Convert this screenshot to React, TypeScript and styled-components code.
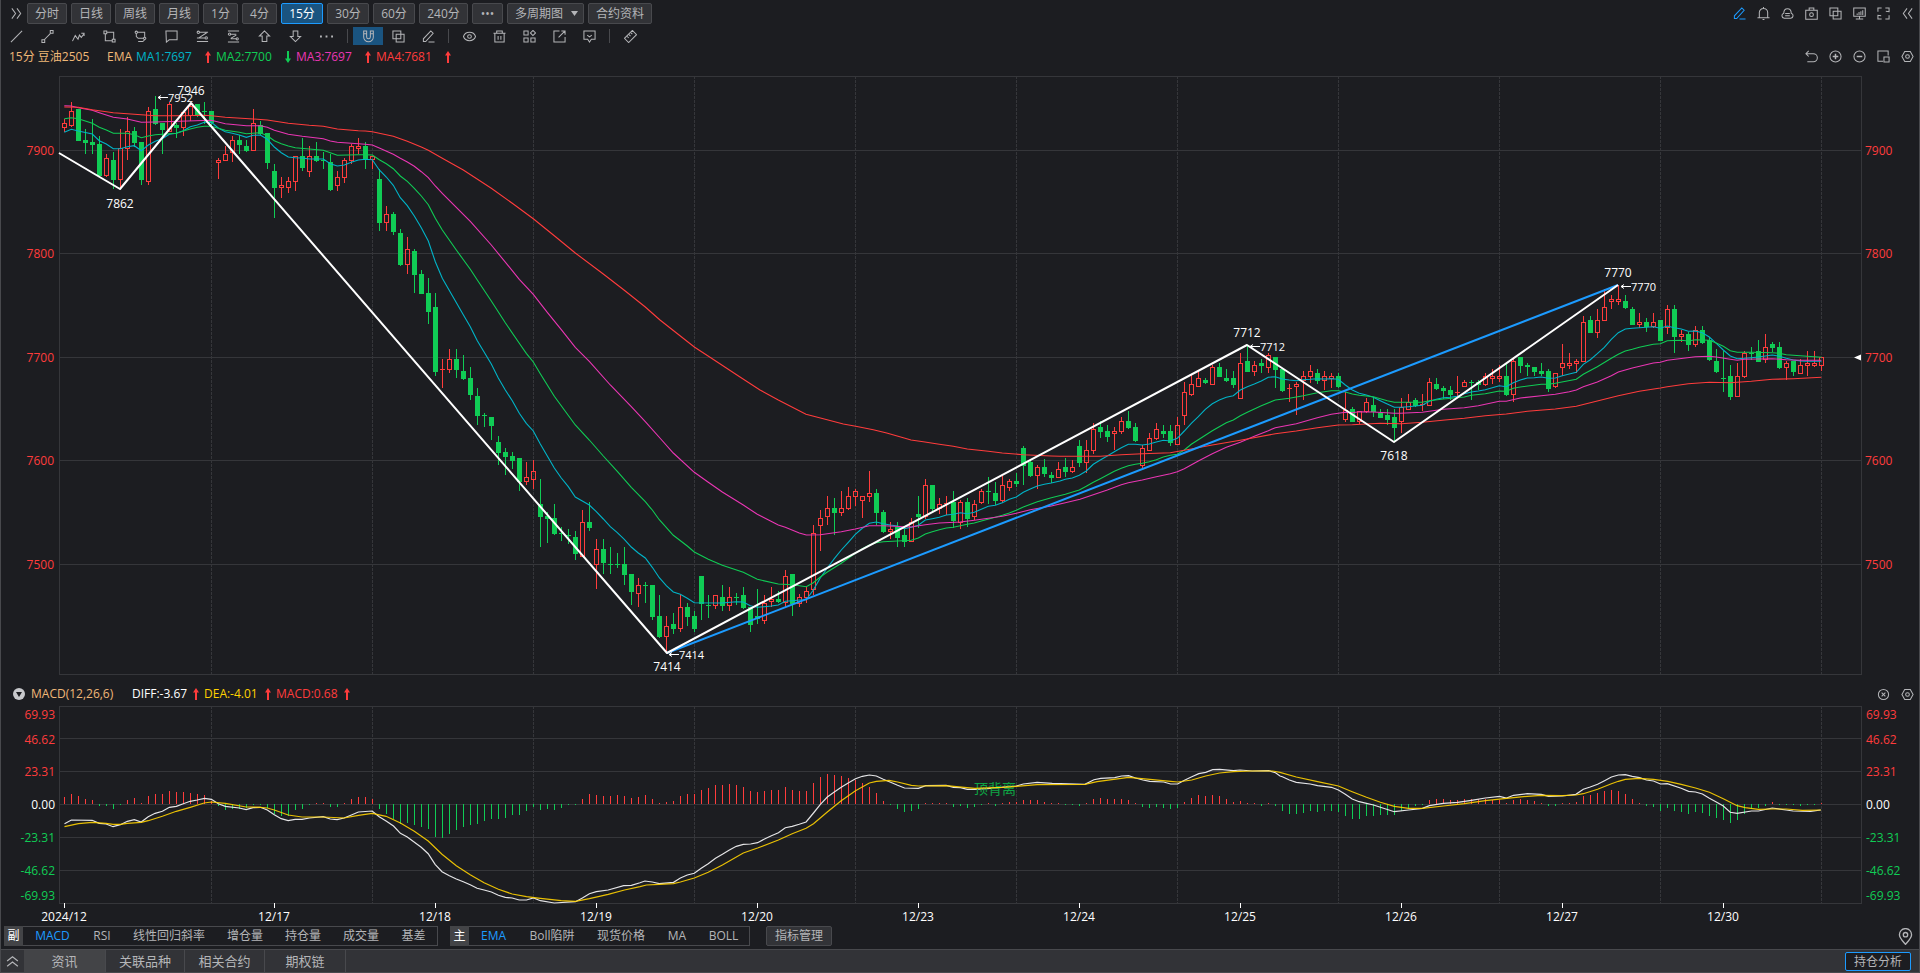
import React from "react";
import styled, { createGlobalStyle, css } from "styled-components";

/* ---------- theme ---------- */

const c = {
  bg: "#1c1d21",
  panel: "#323337",
  panelOn: "#434447",
  line: "#48494d",
  grid: "#35363a",
  text: "#b4b5b8",
  white: "#ffffff",
  tan: "#f0b878",
  cyan: "#00b4c8",
  green: "#10cc55",
  magenta: "#ea36b4",
  red: "#ff3c3c",
  yellow: "#ffd200",
  blue: "#1c9bff",
  activeBg: "#1a5480",
};

const FONT = '"Open Sans", "Noto Sans CJK SC", sans-serif';

const GlobalStyle = createGlobalStyle`
  * { box-sizing: border-box; }
  body { margin: 0; background: ${c.bg}; color: ${c.text}; font: 12px/16px ${FONT}; }
  button, select { font: inherit; color: inherit; margin: 0; }
`;

/* ---------- chart data ---------- */

// Each block holds consecutive 15-minute bars as colour + high, body top,
// body bottom, low. Values are in thirds of a pixel below the block's top.
const CANDLE_BLOCKS: { top: number; bars: string }[] = [
  {
    top: 70,
    bars: `r148,160,173,185 r96,124,167,171 g117,117,213,213 g177,210,219,252 g148,216,225,252 g198,222,318,320
    r252,265,317,322 g246,270,330,356 r177,235,328,352 r142,183,236,270 g172,183,219,232 g216,216,330,345
    r112,124,334,345 g78,117,162,165 g159,159,180,252 r96,102,185,186 g160,165,174,204 r128,128,173,198
    r98,110,136,152 g102,102,135,140 g96,123,126,163 g123,123,160,168 r264,271,277,327 r228,253,271,272
    r198,211,247,276 g196,210,225,252 g210,228,243,246 r117,160,241,243 g153,166,192,195 g189,189,279,297
    g282,303,354,444 r321,346,352,384 r321,334,352,369 r258,259,334,363 g204,258,294,303 r228,259,304,321
    g216,258,273,276 g246,270,273,297 g252,276,360,363 r303,322,346,363 r264,271,322,339 r222,229,271,282
    r204,229,235,252 g216,228,269,297 r258,259,268,297`,
  },
  {
    top: 130,
    bars: `g118,147,279,303 r228,253,278,303 g246,252,306,315 g297,309,405,408 r321,358,404,432 g357,363,435,489
    g420,432,492,492 g444,489,546,582 g489,531,726,738 r687,717,720,774 r657,688,719,729 g657,687,720,744
    g675,723,747,750 g711,744,795,810 g774,798,858,885 g849,855,858,891 g861,861,888,930 g918,936,969,1005
    g954,966,981,1035 g966,978,993,1017 g984,984,1056,1083 r996,1042,1055,1065 r990,1024,1049,1077
    g1047,1122,1161,1251 g1146,1158,1167,1239 g1122,1164,1212,1215 g1191,1209,1212,1233 g1197,1215,1218,1242
    g1203,1221,1272,1290 r1140,1177,1280,1282 g1116,1176,1194,1203 r1227,1258,1304,1377 g1227,1257,1299,1332
    g1251,1302,1305,1332 g1269,1302,1305,1314 g1251,1302,1335,1365 g1332,1332,1386,1425 r1344,1366,1391,1431
    g1356,1365,1368,1419 g1365,1365,1461,1470 g1395,1458,1521,1524`,
  },
  {
    top: 440,
    bars: `r528,559,590,636 g519,552,567,582 r465,502,566,576 g489,501,531,558 g513,528,567,576 g408,408,492,540
    g465,495,498,534 r465,466,497,507 g435,471,498,513 r441,472,497,513 g459,471,474,495 g441,465,504,507
    g501,501,555,576 g447,528,537,552 r465,490,542,552 r441,478,485,501 g453,477,486,489 r390,409,487,501
    g402,402,492,528 r462,472,491,501 r441,454,472,489 r255,280,448,465 r210,235,257,333 r168,205,230,255
    g174,204,219,285 r153,205,218,228 r141,169,206,210 r147,154,170,198 r168,169,182,234 r93,160,170,186
    g147,159,219,255 g210,216,276,279 r246,268,275,297 g246,261,294,321 g258,285,306,321 r234,247,305,306
    g168,222,231,264 r117,136,230,237 g135,135,207,216 r174,193,206,222 r168,190,194,226 g153,186,243,264
    r180,187,248,267 g174,186,237,261 r180,193,230,240 r147,154,188,192 g111,153,156,192 g126,159,183,195
    r108,136,182,189 r117,124,143,153 g99,123,132,141 g18,24,78,135 g57,66,108,111 r75,82,107,147
    g57,81,102,111 g96,105,114,129 r66,88,113,115 g54,81,96,111 r60,82,95,99`,
  },
  {
    top: 320,
    bars: `g360,378,429,441 r360,391,427,459 r309,328,392,402 g303,321,336,353 g315,333,351,366 r321,334,341,390
    r291,304,335,341 g273,303,324,327 g309,321,363,366 r375,385,437,445 r339,355,391,393 r309,328,355,360
    g315,333,342,354 g315,333,369,378 r291,316,374,375 r186,217,287,314 r165,193,224,228 r150,175,199,201
    g174,180,189,192 r135,142,194,195 g129,141,171,172 g147,174,183,187 g153,174,195,204 r99,130,236,237
    g78,123,156,156 r123,136,155,168 g117,129,138,159 r99,106,143,159 g111,111,150,204 g147,147,213,216
    r192,204,207,245 r186,193,199,285 r153,169,180,240 r135,154,170,189 g147,159,183,192 r153,169,182,210
    r159,169,174,204 g159,168,201,204 r216,270,299,306 g261,267,306,306 r273,274,304,312 r234,247,275,279
    g231,255,276,291 g267,279,294,294 g267,285,300,315 g267,291,324,363 r234,262,305,339 r222,247,269,270
    g234,240,258,261`,
  },
  {
    top: 250,
    bars: `r432,463,466,484 r384,397,467,468 g384,402,417,420 g408,414,423,447 g408,420,435,450 r378,426,429,438
    r390,397,409,412 g390,396,399,450 g390,396,405,420 r369,379,404,408 r357,379,385,402 r345,379,385,396
    g339,378,435,438 r321,333,434,456 g321,321,348,369 g339,345,351,378 g351,351,366,378 g339,363,372,378
    g357,363,417,426 r369,370,409,414 r282,340,352,378 r309,340,346,357 r327,334,340,369 r198,217,334,336
    g198,210,249,249 r177,211,248,264 r117,172,211,213 r135,148,154,177 r105,148,154,165 g135,153,174,177
    g171,177,225,225 r189,217,223,234 g204,216,231,246 r189,217,229,234 g210,210,273,273 r165,178,232,252
    g165,177,261,309 r240,253,259,276 g246,252,285,303 r228,241,284,291 g228,240,279,282 g261,270,330,333
    g297,333,366,369 g303,384,387,426 g345,378,441,450 r339,379,440,441 r303,310,380,384 g291,309,312,330
    g270,303,336,336 r252,292,329,339 g276,282,294,306 g276,291,354,357 r333,340,352,390 g333,333,366,378
    r327,346,370,372 r303,340,347,378 r303,340,346,351 r321,323,346,363`,
  },
];

interface Candle { up: boolean; high: number; top: number; bottom: number; low: number }

const CANDLES: Candle[] = CANDLE_BLOCKS.flatMap(({ top, bars }) =>
  bars.trim().split(/\s+/).map((bar) => {
    const [high, bodyTop, bodyBottom, low] = bar.slice(1).split(",").map(Number);
    const up = bar[0] === "r";
    const edge = up ? Math.floor : Math.round;
    return {
      up,
      high: top + Math.round(high / 3),
      top: top + edge(bodyTop / 3),
      bottom: top + edge(bodyBottom / 3),
      low: top + Math.round(low / 3),
    };
  })
);

const barX = (i: number) => 64 + i * 7;

// A traced segment: origin, horizontal units per pixel, then "x,y" samples.
type Segment = [number, number, number, string];
const tracePoints = (segments: Segment[]) =>
  segments
    .map(([x0, y0, sx, pts]) =>
      pts.trim().split(/\s+/).map((p) => {
        const [x, y] = p.split(",").map(Number);
        return `${(x0 + x / sx).toFixed(1)},${(y0 + y / 3).toFixed(1)}`;
      }).join(" ")
    )
    .join(" ");

const AVERAGES: { name: string; color: string; points: string }[] = [
  {
    name: "MA1", color: c.cyan,
    points: tracePoints([
      [50, 70, 3, "43,187 64,178 85,183 127,192 148,212 169,222 190,236 211,236 232,230 253,227 274,242 295,225 316,214 337,206 358,193 379,190 400,182 421,170 442,165 463,157 484,157 505,174 526,185 547,190 568,195 589,202 610,196 631,195 652,208 673,231 694,248 715,261 736,263 757,264 778,267 799,267 820,267 841,281 862,288 883,285 904,277 925,270 946,268"],
      [370, 130, 3, "7,89 28,120 49,141 70,166 91,203 112,227 133,258 154,293 175,333 196,395 217,445 280,554 301,590 322,632 364,702 385,744 406,780 427,812 448,850 469,880 490,903 511,942 532,978 553,1014 574,1044 595,1070 616,1101 637,1113 658,1125 679,1145 700,1167 721,1190 742,1208 763,1228 784,1251 805,1269 826,1284"],
      [650, 440, 3, "7,382 28,413 49,437 70,456 91,463 112,475 133,488 217,489 259,485 280,486 301,497 322,502 343,500 364,498 385,495 406,484 427,482 448,480 469,479 490,450 511,414 532,384 553,356 574,330 595,307 616,283 637,265 658,250 679,246 700,251 721,255 742,258 763,266 784,262 805,256 826,240 847,236 868,232 889,225 910,223 931,218 952,221 973,217 994,208 1015,199 1036,196 1057,188 1078,178 1099,171 1120,157 1141,147 1162,138 1183,133 1204,129"],
      [1060, 320, 3, "0,483 16,478 37,474 58,466 79,453 100,433 121,420 142,408 163,395 184,383 205,373 226,373 247,375 268,372 289,366 310,361 331,363 352,355 373,333 394,310 415,290 436,268 457,251 478,240 499,232 520,227 541,210 562,200 583,192 604,183 625,172 646,170 667,177 688,180 709,182 730,179 751,178 772,176 793,177 814,176 835,178 856,195 877,210 898,220 919,225 940,232 961,242 982,252 1003,262 1024,262 1045,260"],
      [1400, 250, 3, "46,468 67,466 88,454 109,448 130,443 151,442 172,439 193,431 214,426 235,423 256,419 277,413 298,407 319,410 340,398 361,390 382,384 403,383 424,381 445,385 466,384 487,377 508,372 529,367 550,343 571,329 592,311 613,292 634,268 655,248 676,237 697,235 718,233 739,232 760,230 781,235 802,228 823,233 844,237 865,244 886,243 907,248 928,261 949,280 970,300 991,318 1012,326 1033,325 1054,323 1075,321 1096,318 1117,315 1138,319 1159,325 1180,330 1201,333 1222,334 1264,334"],
    ]),
  },
  {
    name: "MA2", color: c.green,
    points: tracePoints([
      [50, 70, 3, "43,146 64,143 85,146 127,160 148,172 169,180 190,190 232,190 253,194 274,203 295,198 316,194 379,190 400,183 421,177 442,172 463,169 484,169 505,175 526,181 568,187 589,191 631,188 652,197 673,212 694,221 715,228 736,233 820,241 841,248 862,256 925,254 946,254"],
      [370, 130, 3, "7,75 28,89 49,101 70,116 91,138 112,154 133,175 154,198 175,224 196,265 217,300 259,360 301,418 322,450 364,513 406,578 448,640 469,670 490,696 511,731 553,799 616,885 658,930 700,978 742,1024 784,1072 826,1115"],
      [650, 440, 3, "0,202 7,210 28,239 70,286 112,318 133,336 175,358 217,376 280,397 322,418 385,432 427,434 469,440 490,428 511,411 532,396 574,370 616,340 637,326 658,315 679,308 700,305 742,303 784,301 805,294 826,282 847,275 868,269 889,264 910,262 952,253 973,249 994,243 1036,232 1057,226 1078,219 1099,211 1120,201 1162,185 1204,173 1246,163"],
      [1060, 320, 3, "58,510 79,499 100,487 121,476 163,454 184,445 205,437 226,433 247,430 268,425 289,419 310,411 331,406 352,403 373,390 394,373 415,359 457,332 499,308 520,300 541,287 562,277 604,257 646,240 688,235 730,227 772,218 814,212 835,212 856,216 877,222 898,226 940,230 982,242 1003,247"],
      [1400, 250, 3, "0,457 67,457 88,452 130,447 193,441 214,436 256,431 298,423 319,424 340,415 361,411 424,403 445,403 466,400 529,388 550,373 592,350 634,325 655,313 676,303 697,298 718,292 760,283 781,281 802,272 844,271 865,273 886,269 928,271 949,279 970,289 991,302 1012,307 1054,307 1117,308 1138,310 1159,314 1201,317 1264,322"],
    ]),
  },
  {
    name: "MA3", color: c.magenta,
    points: tracePoints([
      [50, 70, 3, "43,107 64,108 85,113 127,121 148,128 190,142 232,147 274,157 316,156 484,151 526,161 589,167 631,167 652,172 673,181 715,193 757,199 820,206 841,213 862,217 904,220 946,223"],
      [370, 130, 3, "7,45 28,54 70,73 91,85 112,96 133,109 154,125 175,143 196,168 217,190 301,274 364,345 448,448 490,493 532,547 574,599 616,652 658,694 721,765 784,830 826,875"],
      [650, 440, 3, "35,0 70,39 133,97 175,127 217,156 280,195 322,223 385,255 406,262 448,279 469,285 511,284 574,275 616,267 658,257 700,257 784,261 826,254 868,249 931,246 973,241 1015,235 1057,229 1099,220 1141,209 1204,198 1246,188 1290,178"],
      [1060, 320, 3, "142,510 184,494 205,488 247,480 289,470 331,461 352,455 373,446 415,423 457,401 499,382 541,367 583,349 625,332 646,323 709,311 772,293 814,283 856,277 877,278 898,275 940,276 1003,280"],
      [1400, 250, 3, "0,490 67,487 88,484 130,478 193,473 235,467 298,454 319,454 361,444 424,437 466,433 508,425 529,420 550,410 592,396 634,377 655,366 697,354 760,339 781,337 802,331 886,320 928,319 949,321 991,328 1012,331 1033,328 1117,326 1159,329 1201,331 1264,331"],
    ]),
  },
  {
    name: "MA4", color: c.red,
    points: tracePoints([
      [50, 70, 3, "43,111 85,112 127,119 190,128 274,134 316,137 400,137 463,136 484,137 526,142 610,147 652,150 715,160 778,166 820,169 862,177 925,182 946,183"],
      [370, 130, 3, "7,5 70,19 112,34 154,51 175,61 217,85 280,120 364,175 427,220 490,266 553,317 616,369 700,432 763,481 826,531"],
      [660, 320, 3, "0,0 103,81 150,112 240,171 300,210 355,240 438,283 490,296 550,312 587,319 640,329 680,339 730,353"],
      [650, 440, 3, "783,0 820,5 868,13 910,19 952,27 1015,34 1057,39 1120,44 1204,48"],
      [1060, 320, 3, "0,409 121,409 184,404 247,401 331,398 394,387 457,375 541,361 646,341 709,333 772,323 835,315 877,314 961,310 1024,311"],
      [1400, 250, 3, "67,517 135,510 193,505 256,497 319,492 382,484 466,477 529,469 571,458 655,437 718,424 781,414 802,410 865,401 928,397 991,398 1054,394 1117,388 1180,386 1264,382"],
    ]),
  },
];

const DIFF = tracePoints([
  [0, 680, 2.45, "158,431 175,420 226,421 243,430 260,432 277,440 295,434 312,424 329,419 346,426 363,410 380,400 398,394 415,382 432,379 449,371 466,364 483,360 501,355 518,358 535,371 552,379 586,384 603,389 620,383 638,382 655,390 672,404 689,416 706,422 723,418 740,418 758,414 792,410 809,417 826,419 843,414 861,405 878,396 912,393 929,410 946,423 964,438 981,460 998,471 1032,502 1049,521 1066,553 1083,575 1101,587 1118,597 1135,605 1152,614 1169,625 1186,630 1204,636 1221,646 1238,652 1255,654 1272,660 1290,660 1307,654 1324,662 1358,669 1410,665 1427,654 1444,641 1461,635 1490,630 1528,617 1547,616"],
  [640, 680, 2.45, "0,608 12,603 30,606 47,611 82,607 99,594 116,585 133,580 150,565 167,551 185,535 202,523 219,510 236,499 253,493 271,492 288,488 305,477 322,467 339,458 356,443 373,439 390,433 407,426 425,399 442,373 459,351 476,336 493,322 511,308 528,296 545,289 562,285 579,288 596,298 614,307 631,316 648,324 682,325 700,317 750,316 768,322 785,323 802,328 820,328 850,326 905,320 922,318 939,312 973,307 1010,310 1090,313 1112,299 1129,295 1163,293 1180,288 1197,287 1214,294 1232,300 1249,304 1283,306 1300,312 1317,312 1334,301 1352,290 1369,281 1386,277 1403,269 1420,268 1454,272 1470,270 1500,273 1540,272 1557,278"],
  [1280, 680, 2.45, "0,288 6,290 23,300 40,307 74,312 92,317 126,322 143,330 160,343 177,357 194,365 212,370 229,375 246,382 280,395 315,390 349,385 366,377 400,370 435,367 469,361 503,354 538,349 555,354 572,346 606,341 640,343 658,349 692,348 725,343 743,328 760,321 778,313 795,302 812,291 829,285 846,284 863,289 881,293 898,300 915,303 932,312 949,311 983,325 1001,334 1018,336 1035,342 1052,355 1069,366 1086,378 1103,397 1120,400 1155,393 1172,393 1206,384 1240,390 1257,393 1300,394 1325,390"],
]);

const DEA = tracePoints([
  [0, 680, 2.45, "158,440 192,431 226,427 260,430 277,433 295,433 312,430 346,427 363,422 398,409 432,394 466,382 500,369 518,366 552,370 603,381 638,382 655,384 672,390 706,405 740,411 792,411 843,414 878,406 912,400 946,409 981,429 1015,454 1049,483 1083,523 1118,557 1152,584 1186,608 1221,628 1255,642 1290,650 1324,655 1375,662 1410,664 1444,656 1490,643 1530,630"],
  [640, 680, 2.45, "0,620 16,615 47,613 82,611 99,606 133,594 167,577 202,555 253,519 288,504 339,480 373,461 407,445 425,431 459,396 493,362 528,332 562,309 579,304 610,301 631,306 665,316 682,318 750,317 820,325 888,322 922,319 973,314 1090,313 1120,305 1197,292 1249,298 1300,304 1317,306 1352,300 1386,288 1420,279 1454,275 1500,273 1550,273"],
  [1280, 680, 2.45, "0,277 40,291 92,305 143,318 177,335 212,352 246,367 280,379 315,385 349,385 400,378 452,371 503,362 555,355 606,349 640,346 692,347 725,345 743,341 778,328 812,311 829,304 846,298 880,295 915,298 950,304 983,313 1018,324 1052,337 1086,356 1120,377 1140,383 1172,388 1206,387 1240,387 1280,391 1325,390"],
]);

// MACD histogram, one value per bar, in thirds of a pixel from the zero line.
const HISTOGRAM = [
  21, 31, 23, 16, 11, -5, -5, -14, -2, 13, 17, 1, 25, 30, 31, 40, 35, 35, 34, 31, 28, 10, -5, -17, -15, -15, -11, -3, -3,
  -12, -29, -35, -35, -17, -14, -2, 1, 4, -8, -8, 4, 16, 22, 20, 16, -14, -29, -44, -59, -57, -62, -68, -74, -98, -101,
  -89, -77, -68, -62, -59, -50, -44, -44, -41, -32, -32, -20, -8, -17, -14, -17, -11, -2, -2, 16, 31, 28, 25, 25, 28,
  25, 19, 22, 28, 16, 4, 7, 10, 25, 31, 31, 43, 49, 58, 58, 61, 58, 52, 40, 37, 40, 43, 43, 52, 43, 40, 40, 64, 82, 91,
  88, 85, 79, 73, 64, 52, 34, 10, -2, -14, -23, -20, -14, 4, 1, 1, 1, -8, -5, -11, -8, -2, 4, -5, 4, 7, 7, 13, 13, 13,
  7, 2, 1, -2, -2, -5, 4, 16, 19, 16, 16, 16, 13, 2, -8, -11, -8, -11, -14, -11, 7, 19, 28, 25, 28, 25, 16, 7, 10, 4,
  4, -5, 2, -5, -20, -29, -29, -26, -20, -23, -20, -20, -23, -35, -44, -44, -35, -35, -32, -32, -32, -20, -14, -5, -2,
  13, 16, 16, 13, 13, 16, 14, 16, 15, 13, 13, 4, 13, 16, 13, 10, 4, -5, -5, 1, 4, 7, 25, 28, 34, 40, 43, 40, 31, 16, 4,
  -5, -8, -20, -11, -20, -23, -29, -23, -26, -35, -41, -47, -56, -47, -29, -14, -11, -5, 7, -4, -2, -4, -5, -2, -4, 4,
];

const PRICE_TICKS = [7900, 7800, 7700, 7600, 7500].map((value, i) => ({ value, y: [150, 253, 357, 460, 564][i] }));
const SESSION_LINES = Array.from({ length: 11 }, (_, i) => barX(21 + i * 23));
const DAY_TICKS = ["12/17", "12/18", "12/19", "12/20", "12/23", "12/24", "12/25", "12/26", "12/27", "12/30"];
const MACD_TICKS = [
  { value: "69.93", label: 715, line: 0, tone: c.red },
  { value: "46.62", label: 740, line: 738, tone: c.red },
  { value: "23.31", label: 772, line: 771, tone: c.red },
  { value: "0.00", label: 805, line: 804, tone: c.white },
  { value: "-23.31", label: 838, line: 837, tone: c.green },
  { value: "-46.62", label: 871, line: 870, tone: c.green },
  { value: "-69.93", label: 896, line: 0, tone: c.green },
];
const PEAKS = [
  { value: 7862, x: 120, y: 204 },
  { value: 7946, x: 191, y: 91 },
  { value: 7414, x: 667, y: 667 },
  { value: 7712, x: 1247, y: 333 },
  { value: 7618, x: 1394, y: 456 },
  { value: 7770, x: 1618, y: 273 },
];
const EXTREMES = [
  { value: 7952, x: 158, y: 98 },
  { value: 7414, x: 669, y: 655 },
  { value: 7712, x: 1250, y: 347 },
  { value: 7770, x: 1621, y: 287 },
];

/* ---------- icons ---------- */

const ICONS: Record<string, React.ReactNode> = {
  more: <path d="M2 1.5 6 7 2 12.5M7.500 1.5 11.500 7 7.500 12.5" />,
  fold: <path d="M6.500 1.5 2.5 7 6.500 12.5M12 1.5 8 7 12 12.5" />,
  up: <path d="M2 6.5 7 2.5l5 4M2 11.5l5-4 5 4" />,
  line: <path d="M1 13 13 1" />,
  segment: <path d="M3.500 10.500 10 4M1 10.500h3v3H1zM10 .500h3v3h-3z" />,
  wave: <path d="M.500 12 3.500 6l3 4L8 5.500l2 2.500 3-4M10 3.500h3v3" />,
  box: <path d="M1 1h3v3H1zM10 10h3v3h-3zM4 2.500h7.500V10M2.500 4v7.500H10" />,
  rect: <><path d="M4 2.500h7.500v5M10.500 9H4.500L2.500 7V4M4.500 12.500h5l2-2" /><circle cx="2.500" cy="2.500" r="1.300" /><circle cx="11.500" cy="9" r="1.300" /></>,
  bubble: <path d="M1 1h12v9.500H4.500L1.500 13z" />,
  fibo: <><path d="M4 2.500h9M11.500 3 3 8.500M1 8.500h8.500M1 12.500h12" /><circle cx="2.500" cy="2.500" r="1.300" /><circle cx="11" cy="8.500" r="1.300" /></>,
  fibo2: <><path d="M1 1h12M4 4.500h6M10 5.500 4 9M4 9.500h6M1 12.800h12" /><circle cx="2.700" cy="4.500" r="1.200" /><circle cx="11" cy="9.500" r="1.200" /></>,
  arrowUp: <path d="M7 1 1.500 6.500h3v6h5v-6h3z" />,
  arrowDown: <path d="M7 12.500 1.500 7h3V1h5v6h3z" />,
  dots: <path d="M0 7h2M6 7h2M12 7h2" strokeWidth="2" />,
  magnet: <path d="M1.800 1v6.500a5.200 5.200 0 0 0 10.400 0V1H9v6.500a2 2 0 0 1-4 0V1zM1.800 4H5M9 4h3.200" />,
  copy: <path d="M1 1h8.500v8.500H1zM4.500 4.500H13V13H4.500z" />,
  pencil: <path d="M1.500 12.500v-3L9.500 1l2.500 2.500-8 9zM7 13h6.500" />,
  eye: <><path d="M.500 7c2-6 11-6 13 0-2 6-11 6-13 0z" /><circle cx="7" cy="7" r="2" /></>,
  trash: <path d="M.500 3.500h13M4 3.500V1h6v2.500M2 3.500V13h10V3.500M5.500 6.500v4M8.500 6.500v4" />,
  grid: <path d="M1 1h4.500v4.500H1zM1 8.500h4.500V13H1zM8.500 8.500H13V13H8.500zM10.700.500l2.800 2.700L10.700 6 8 3.200z" />,
  external: <path d="M7 1H1v12h12V7.500M6 8l7-7M9 1h4v4" />,
  comment: <path d="M1 1h12v9H9l-2 3-2-3H1zM4.500 5.500 7 7.500l2.500-2" />,
  ruler: <path d="M9 .500 13.500 5 5 13.500.500 9zM3.500 7 5 8.500M5.500 5 7 6.500M7.500 3 9 4.500" />,
  bell: <path d="M.500 11.500h13M2.500 11.500V6a4.500 4.500 0 0 1 9 0v5.500M6 13.500h2M7 1.500V0" />,
  cloud: <path d="M3.500 12a2.700 2.700 0 0 1-.500-5.300c0-6.500 8-6.500 8 0a2.700 2.700 0 0 1-.500 5.300zM4.500 7h5M4.500 9.500h5" />,
  camera: <><path d="M.800 3.500h12.400v9.700H.800zM4.500 3.500V1h5v2.500" /><circle cx="7" cy="8.300" r="2" /></>,
  monitor: <path d="M.800 1h12.400v9H.800zM7 10v3M3 13h8M4.500 8.500V7M6.500 8.500V5.500M8.500 8.500v-4M10.500 8.500v-5" />,
  expand: <path d="M1 5V1h4M9 1h4v4L9.500 4.500M13 9v4H9M5 13H1V9l3.500.500" />,
  undo: <path d="M4 1 1 4l3 3M1 4h8a4.300 4.300 0 0 1 0 8.600H2.500" />,
  plus: <><circle cx="7" cy="7" r="6" /><path d="M4 7h6M7 4v6" strokeWidth="1.600" /></>,
  minus: <><circle cx="7" cy="7" r="6" /><path d="M4 7h6" strokeWidth="1.600" /></>,
  pip: <path d="M6.500 12H1V1h11v5M7.500 7.500H13V13H7.500z" />,
  close: <><circle cx="7" cy="7" r="5.500" /><path d="M5 5l4 4M9 5l-4 4" /></>,
  gear: <><path d="M4 1.500h6L13 7l-3 5.500H4L1 7z" /><circle cx="7" cy="7" r="2" /></>,
  pin: <><path d="M7 13.500C4 10 2 8 2 5.500a5 5 0 0 1 10 0C12 8 10 10 7 13.500z" /><circle cx="7" cy="5.500" r="1.800" /></>,
};

const Glyph = styled.svg`
  display: block;
  fill: none;
  stroke: currentColor;
  stroke-width: 1.1;
`;

const Icon = ({ name, size = 13 }: { name: string; size?: number }) => (
  <Glyph width={size} height={size} viewBox="0 0 14 14" aria-hidden="true">{ICONS[name]}</Glyph>
);

const TrendSvg = styled.svg<{ $down?: boolean }>`
  display: block;
  color: ${(p) => (p.$down ? c.green : c.red)};
  transform: ${(p) => (p.$down ? "rotate(180deg)" : "none")};
`;

const Trend = ({ down }: { down?: boolean }) => (
  <TrendSvg $down={down} width="6" height="12" viewBox="0 0 6 12" role="img" aria-label={down ? "下降" : "上升"}>
    <path d="M3 0 6 4.500H4V12H2V4.500H0z" fill="currentColor" />
  </TrendSvg>
);

/* ---------- layout ---------- */

const Page = styled.div`
  min-height: 100vh;
  display: flex;
  flex-direction: column;
  border: solid ${c.line};
  border-width: 0 1px;
`;

const Bar = styled.div`
  display: flex;
  align-items: center;
`;

const PeriodBar = styled(Bar)`
  height: 27px;
  gap: 4px;
`;

const Spacer = styled.div`
  flex: 1;
`;

const IconButton = styled.button<{ $w: number; $tone?: string; $on?: boolean }>`
  width: ${(p) => p.$w}px;
  height: 18px;
  padding: 0;
  border: 0;
  display: flex;
  align-items: center;
  justify-content: center;
  flex: none;
  background: ${(p) => (p.$on ? c.activeBg : "transparent")};
  color: ${(p) => p.$tone ?? c.text};
`;

const boxed = css`
  height: 21px;
  border: 1px solid ${c.line};
  border-radius: 2px;
  background: ${c.panel};
  color: ${c.text};
  line-height: 18px;
  white-space: nowrap;
  flex: none;
`;

const PeriodButton = styled.button<{ $w: number; $on?: boolean }>`
  ${boxed}
  width: ${(p) => p.$w}px;
  padding: 0;
  ${(p) => p.$on && css`
    background: ${c.activeBg};
    border-color: ${c.blue};
    color: ${c.white};
  `}
`;

const LeadButton = styled(IconButton)`
  padding-left: 8px;
`;

const SelectWrap = styled.label`
  position: relative;
  display: block;
`;

const PeriodSelect = styled.select`
  ${boxed}
  display: block;
  width: 77px;
  padding: 0 20px 0 7px;
  appearance: none;
`;

const Caret = styled.svg`
  position: absolute;
  right: 6px;
  top: 8px;
  pointer-events: none;
`;

const DrawBar = styled(Bar)`
  height: 18px;
`;

const Divider = styled.i`
  width: 1px;
  height: 14px;
  margin: 0 5px;
  background: ${c.line};
`;

const LegendBar = styled(Bar)`
  height: 23px;
  padding-left: 8px;
  color: ${c.tan};
`;

const Contract = styled.span`
  width: 98px;
`;

const LegendTitle = styled.span`
  width: 29px;
`;

const LegendItem = styled.span<{ $tone: string; $w?: number }>`
  width: ${(p) => p.$w ?? 80}px;
  padding-right: 5px;
  display: flex;
  align-items: center;
  justify-content: space-between;
  color: ${(p) => p.$tone};
`;

const ChartSvg = styled.svg`
  display: block;
  width: 100%;
  height: auto;
  font: 12px ${FONT};
`;

const MacdBar = styled(Bar)`
  height: 20px;
  padding-left: 12px;
  color: ${c.tan};
`;

const MacdTitle = styled.span`
  width: 101px;
`;

const Collapse = styled.button`
  width: 12px;
  height: 12px;
  margin-right: 6px;
  padding: 0;
  border: 0;
  background: none;
`;

const IndicatorBar = styled(Bar)`
  padding: 0 0 3px 3px;
`;

const IndicatorGroup = styled(Bar)`
  height: 20px;
  margin-right: 12px;
  border: 1px solid ${c.line};
`;

const GroupMark = styled.b`
  width: 19px;
  height: 20px;
  margin-left: -1px;
  background: ${c.panelOn};
  color: ${c.white};
  font-weight: 400;
  line-height: 20px;
  text-align: center;
`;

const IndicatorTab = styled.button<{ $w: number; $on?: boolean }>`
  width: ${(p) => p.$w}px;
  padding: 0;
  border: 0;
  background: none;
  line-height: 18px;
  white-space: nowrap;
  color: ${(p) => (p.$on ? c.blue : c.text)};
`;

const ManageButton = styled.button`
  ${boxed}
  height: 20px;
  width: 66px;
  margin-left: 4px;
  padding: 0;
`;

const FooterBar = styled(Bar)`
  height: 24px;
  border: solid ${c.line};
  border-width: 1px 0;
  background: ${c.panel};
  align-items: stretch;
`;

const FooterToggle = styled.button`
  width: 23px;
  padding: 0 0 0 4px;
  border: 0;
  background: none;
  display: flex;
  align-items: center;
`;

const FooterTab = styled.button<{ $w: number; $on?: boolean }>`
  width: ${(p) => p.$w}px;
  padding: 0;
  border: 0;
  border-right: 1px solid ${c.line};
  background: ${(p) => (p.$on ? c.panelOn : "transparent")};
  font-size: 13px;
  line-height: 20px;
`;

const AnalysisButton = styled.button`
  width: 66px;
  height: 19px;
  margin: 2px 8px 0 0;
  padding: 0;
  border: 1px solid ${c.blue};
  border-radius: 2px;
  background: ${c.bg};
  line-height: 16px;
`;

/* ---------- chart parts ---------- */

const PLOT_LEFT = 59;
const PLOT_RIGHT = 1861;

const Frame = ({ top, bottom, rows }: { top: number; bottom: number; rows: number[] }) => (
  <g stroke={c.grid} fill="none" shapeRendering="crispEdges">
    <rect x={PLOT_LEFT + 0.5} y={top + 0.5} width={PLOT_RIGHT - PLOT_LEFT} height={bottom - top} />
    {rows.map((y) => <line key={y} x1={PLOT_LEFT} x2={PLOT_RIGHT} y1={y + 0.5} y2={y + 0.5} />)}
    {SESSION_LINES.map((x) => (
      <line key={x} x1={x + 0.5} x2={x + 0.5} y1={top} y2={bottom} strokeDasharray="3 1" />
    ))}
  </g>
);

const CandleMark = ({ candle, x }: { candle: Candle; x: number }) => {
  const { up, high, top, bottom, low } = candle;
  if (!up) {
    return (
      <g fill={c.green}>
        <rect x={x} y={high} width="1" height={low - high} />
        <rect x={x - 2} y={top} width="5" height={Math.max(1, bottom - top)} />
      </g>
    );
  }
  const flat = bottom - top <= 1;
  return (
    <g fill={c.red}>
      {top > high && <rect x={x} y={high} width="1" height={top - high} />}
      {low > bottom && <rect x={x} y={bottom} width="1" height={low - bottom} />}
      {flat
        ? <rect x={x - 2} y={top} width="5" height="1" />
        : <rect x={x - 1.5} y={top + 0.5} width="4" height={bottom - top} fill="none" stroke={c.red} />}
    </g>
  );
};

const PriceChart = () => (
  <ChartSvg viewBox="1 68 1918 616" role="img" aria-label="豆油2505 15分钟K线图">
    <Frame top={76} bottom={674} rows={PRICE_TICKS.map((t) => t.y)} />
    {PRICE_TICKS.map(({ value, y }) => (
      <g key={value} fill={c.red}>
        <text x="54" y={y + 5} textAnchor="end">{value}</text>
        <text x="1865" y={y + 5}>{value}</text>
      </g>
    ))}
    <g shapeRendering="crispEdges">
      {CANDLES.map((candle, i) => <CandleMark key={i} candle={candle} x={barX(i)} />)}
    </g>
    <g fill="none" strokeWidth="1.100">
      {AVERAGES.map((ma) => <polyline key={ma.name} points={ma.points} stroke={ma.color} />)}
    </g>
    <line x1="667" y1="653" x2="1618" y2="285" stroke={c.blue} strokeWidth="2" />
    <polyline
      points="59,153 120,189 191,103 667,653 1247,345 1394,442 1618,285"
      fill="none" stroke={c.white} strokeWidth="2" strokeLinejoin="round"
    />
    <g fill={c.white} textAnchor="middle" fontWeight="500">
      {PEAKS.map((p) => <text key={p.value} x={p.x} y={p.y + 4}>{p.value}</text>)}
    </g>
    <g fill={c.white} fontSize="11">
      {EXTREMES.map((e) => (
        <g key={e.value}>
          <path d={`M${e.x} ${e.y - 0.5}h10M${e.x + 3} ${e.y - 2.5}l-3 2 3 2`} fill="none" stroke={c.white} />
          <text x={e.x + 10} y={e.y + 4}>{e.value}</text>
        </g>
      ))}
    </g>
    <path d="M1854 357.500 1861 354.500v6z" fill={c.white} />
  </ChartSvg>
);

const MacdChart = () => (
  <ChartSvg viewBox="1 704 1918 222" role="img" aria-label="MACD 指标图">
    <Frame top={706} bottom={903} rows={MACD_TICKS.filter((t) => t.line).map((t) => t.line)} />
    {MACD_TICKS.map((t) => (
      <g key={t.value} fill={t.tone}>
        <text x="55" y={t.label + 4} textAnchor="end">{t.value}</text>
        <text x="1866" y={t.label + 4}>{t.value}</text>
      </g>
    ))}
    <g shapeRendering="crispEdges">
      {HISTOGRAM.map((v, i) => {
        const h = Math.max(1, Math.round(Math.abs(v) / 3));
        return <rect key={i} x={barX(i)} y={v > 0 ? 804 - h : 804} width="1" height={h} fill={v > 0 ? c.red : c.green} />;
      })}
    </g>
    <polyline points={DIFF} fill="none" stroke="#e4e4e6" strokeWidth="1.200" />
    <text x="995" y="794" textAnchor="middle" fontSize="14" fill="#0ea344">顶背离</text>
    <polyline points={DEA} fill="none" stroke={c.yellow} strokeWidth="1.200" opacity="0.9" />
    <g fill={c.white} textAnchor="middle">
      <rect x="64" y="903" width="1" height="5" />
      <text x="64" y="921">2024/12</text>
      {DAY_TICKS.map((d, i) => (
        <g key={d}>
          <rect x={barX(30 + i * 23)} y="903" width="1" height="5" />
          <text x={barX(30 + i * 23)} y="921">{d}</text>
        </g>
      ))}
    </g>
  </ChartSvg>
);

/* ---------- page ---------- */

const PERIODS: [string, number][] = [
  ["分时", 40], ["日线", 40], ["周线", 40], ["月线", 40], ["1分", 35], ["4分", 35],
  ["15分", 42], ["30分", 42], ["60分", 42], ["240分", 49], ["•••", 31],
];

const DRAW_TOOLS: [string, string][] = [
  ["line", "直线"], ["segment", "线段"], ["wave", "波浪"], ["box", "矩形"], ["rect", "平行线"], ["bubble", "文字"],
  ["fibo", "黄金分割"], ["fibo2", "斐波那契"], ["arrowUp", "向上"], ["arrowDown", "向下"], ["dots", "更多"],
];
const EDIT_TOOLS: [string, string][] = [["magnet", "吸附"], ["copy", "复制"], ["pencil", "编辑"]];
const VIEW_TOOLS: [string, string][] = [
  ["eye", "显示"], ["trash", "删除"], ["grid", "组件"], ["external", "导出"], ["comment", "备注"],
];
const WINDOW_TOOLS: [string, string][] = [
  ["pencil", "画线"], ["bell", "预警"], ["cloud", "云"], ["camera", "截图"], ["copy", "叠加"],
  ["monitor", "行情"], ["expand", "全屏"], ["fold", "收起"],
];
const CHART_TOOLS: [string, string][] = [
  ["undo", "撤销"], ["plus", "放大"], ["minus", "缩小"], ["pip", "画中画"], ["gear", "设置"],
];

const SUB_INDICATORS: [string, number][] = [
  ["MACD", 59], ["RSI", 40], ["线性回归斜率", 94], ["增仓量", 58], ["持仓量", 58], ["成交量", 58], ["基差", 47],
];
const MAIN_INDICATORS: [string, number][] = [
  ["EMA", 49], ["Boll陷阱", 68], ["现货价格", 70], ["MA", 42], ["BOLL", 51],
];

const Tools = ({ items, width, on }: { items: [string, string][]; width: number; on?: string }) => (
  <>
    {items.map(([name, label]) => (
      <IconButton key={name} $w={width} $on={name === on} aria-label={label}><Icon name={name} /></IconButton>
    ))}
  </>
);

const Indicators = ({ mark, items, on }: { mark: string; items: [string, number][]; on: string }) => (
  <IndicatorGroup>
    <GroupMark>{mark}</GroupMark>
    {items.map(([label, w]) => <IndicatorTab key={label} $w={w} $on={label === on}>{label}</IndicatorTab>)}
  </IndicatorGroup>
);

const App = () => (
  <>
    <GlobalStyle />
    <Page>
      <PeriodBar as="nav" aria-label="周期">
        <LeadButton $w={22} aria-label="展开"><Icon name="more" /></LeadButton>
        {PERIODS.map(([label, w]) => (
          <PeriodButton key={label} $w={w} $on={label === "15分"}>{label}</PeriodButton>
        ))}
        <SelectWrap>
          <PeriodSelect aria-label="多周期图" defaultValue="multi">
            <option value="multi">多周期图</option>
          </PeriodSelect>
          <Caret width="7" height="5" viewBox="0 0 7 5"><path d="M0 0h7L3.500 5z" fill={c.text} /></Caret>
        </SelectWrap>
        <PeriodButton $w={64}>合约资料</PeriodButton>
        <Spacer />
        <Bar>
          {WINDOW_TOOLS.map(([name, label], i) => (
            <IconButton key={label} $w={24} $tone={i === 0 ? c.blue : undefined} aria-label={label}>
              <Icon name={name} />
            </IconButton>
          ))}
        </Bar>
      </PeriodBar>

      <DrawBar role="toolbar" aria-label="画线工具">
        <Tools items={DRAW_TOOLS} width={31} />
        <Divider />
        <Tools items={EDIT_TOOLS} width={30} on="magnet" />
        <Divider />
        <Tools items={VIEW_TOOLS} width={30} />
        <Divider />
        <Tools items={[["ruler", "测量"]]} width={30} />
      </DrawBar>

      <LegendBar>
        <Contract>15分 豆油2505</Contract>
        <LegendTitle>EMA</LegendTitle>
        <LegendItem $tone={c.cyan}>MA1:7697<Trend /></LegendItem>
        <LegendItem $tone={c.green}>MA2:7700<Trend down /></LegendItem>
        <LegendItem $tone={c.magenta}>MA3:7697<Trend /></LegendItem>
        <LegendItem $tone={c.red}>MA4:7681<Trend /></LegendItem>
        <Spacer />
        <Tools items={CHART_TOOLS} width={24} />
      </LegendBar>

      <PriceChart />

      <MacdBar>
        <Collapse aria-label="折叠">
          <svg width="12" height="12" viewBox="0 0 12 12" display="block">
            <circle cx="6" cy="6" r="6" fill="#c8c9cc" /><path d="M3 4h6L6 9z" fill={c.bg} />
          </svg>
        </Collapse>
        <MacdTitle>MACD(12,26,6)</MacdTitle>
        <LegendItem $w={72} $tone={c.white}>DIFF:-3.67<Trend /></LegendItem>
        <LegendItem $w={72} $tone={c.yellow}>DEA:-4.01<Trend /></LegendItem>
        <LegendItem $w={79} $tone={c.red}>MACD:0.68<Trend /></LegendItem>
        <Spacer />
        <Tools items={[["close", "关闭"], ["gear", "设置"]]} width={24} />
      </MacdBar>

      <MacdChart />

      <IndicatorBar>
        <Indicators mark="副" items={SUB_INDICATORS} on="MACD" />
        <Indicators mark="主" items={MAIN_INDICATORS} on="EMA" />
        <ManageButton>指标管理</ManageButton>
        <Spacer />
        <IconButton $w={28} aria-label="定位"><Icon name="pin" size={17} /></IconButton>
      </IndicatorBar>

      <FooterBar>
        <FooterToggle aria-label="展开面板"><Icon name="up" size={15} /></FooterToggle>
        <FooterTab $w={82} $on>资讯</FooterTab>
        <FooterTab $w={79}>关联品种</FooterTab>
        <FooterTab $w={80}>相关合约</FooterTab>
        <FooterTab $w={81}>期权链</FooterTab>
        <Spacer />
        <AnalysisButton>持仓分析</AnalysisButton>
      </FooterBar>
    </Page>
  </>
);

export default App;
